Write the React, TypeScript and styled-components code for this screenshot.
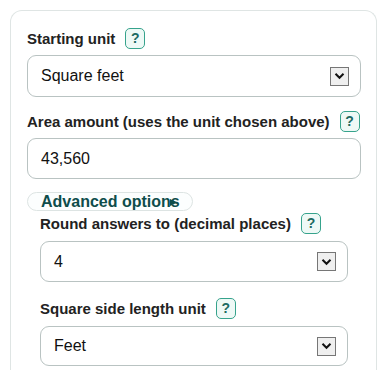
import styled, { createGlobalStyle } from "styled-components";

const GlobalStyle = createGlobalStyle`
    body {
        margin: 0;
        padding: 10px 11px 0 10px;
        background: #ffffff;
        font-family: "Liberation Sans", Arial, sans-serif;
        color: #222;
    }
`;

const Card = styled.div`
    border: 1px solid #dfe5e4;
    border-bottom: none;
    border-radius: 12px 12px 0 0;
    padding: 16px 15px 20px 16px;
    height: 360px;
    box-sizing: border-box;
`;

const Field = styled.div<{ $gap?: number; $after?: number }>`
    display: flex;
    flex-direction: column;
    gap: ${(p) => p.$gap ?? 6}px;
    margin-bottom: ${(p) => p.$after ?? 14}px;
`;

const LabelRow = styled.div`
    display: flex;
    align-items: center;
    gap: 10px;
    height: 22px;
`;

const Label = styled.label`
    font-size: 15px;
    font-weight: 700;
    color: #222;
`;

const HelpBadge = styled.span`
    display: inline-flex;
    align-items: center;
    justify-content: center;
    width: 18px;
    height: 19px;
    border: 1.5px solid #36a38c;
    border-radius: 5px;
    background: #eef9f6;
    color: #1d6a62;
    font-size: 14px;
    font-weight: 700;
`;

const Box = styled.div<{ $height?: number }>`
    display: flex;
    align-items: center;
    justify-content: space-between;
    height: ${(p) => p.$height ?? 42}px;
    box-sizing: border-box;
    border: 1px solid #b9c3c2;
    border-radius: 9px;
    padding: 0 11px 0 13px;
    font-size: 16px;
    color: #111;
    background: #fff;
`;

const ArrowBox = styled.span`
    display: inline-flex;
    align-items: center;
    justify-content: center;
    width: 17px;
    height: 17px;
    border: 1px solid #767676;
    background: #efefef;
`;

const AdvancedToggle = styled.div`
    position: relative;
    display: inline-flex;
    align-items: center;
    width: 166px;
    height: 19px;
    box-sizing: border-box;
    border: 1px solid #dde4e3;
    border-radius: 10px;
    padding-left: 13px;
    margin-top: 1px;
    margin-bottom: 1px;
    font-size: 16px;
    font-weight: 700;
    color: #0e4d4b;
    background: #fcfefe;
`;

const Marker = styled.svg`
    position: absolute;
    left: 141px;
    top: 5px;
`;

const Advanced = styled.div`
    padding: 0 13px;
`;

const Chevron = () => (
    <svg width="11" height="8" viewBox="0 0 11 8">
        <path d="M1.5 1.8 L5.5 5.8 L9.5 1.8" fill="none" stroke="#111" strokeWidth="2" />
    </svg>
);

const SelectBox = ({ value, height }: { value: string; height?: number }) => (
    <Box $height={height}>
        <span>{value}</span>
        <ArrowBox>
            <Chevron />
        </ArrowBox>
    </Box>
);

export default function App() {
    return (
        <>
            <GlobalStyle />
            <Card>
                <Field $after={13}>
                    <LabelRow>
                        <Label>Starting unit</Label>
                        <HelpBadge>?</HelpBadge>
                    </LabelRow>
                    <SelectBox value="Square feet" />
                </Field>
                <Field $gap={6} $after={12}>
                    <LabelRow>
                        <Label>Area amount (uses the unit chosen above)</Label>
                        <HelpBadge>?</HelpBadge>
                    </LabelRow>
                    <Box $height={41}>43,560</Box>
                </Field>
                <AdvancedToggle>
                    Advanced options
                    <Marker width="9" height="9" viewBox="0 0 9 9">
                        <path d="M1 1 L8 4.5 L1 8 Z" fill="#0e4d4b" />
                    </Marker>
                </AdvancedToggle>
                <Advanced>
                    <Field $gap={7} $after={15}>
                        <LabelRow>
                            <Label>Round answers to (decimal places)</Label>
                            <HelpBadge>?</HelpBadge>
                        </LabelRow>
                        <SelectBox value="4" height={41} />
                    </Field>
                    <Field $gap={7}>
                        <LabelRow>
                            <Label>Square side length unit</Label>
                            <HelpBadge>?</HelpBadge>
                        </LabelRow>
                        <SelectBox value="Feet" height={40} />
                    </Field>
                </Advanced>
            </Card>
        </>
    );
}
